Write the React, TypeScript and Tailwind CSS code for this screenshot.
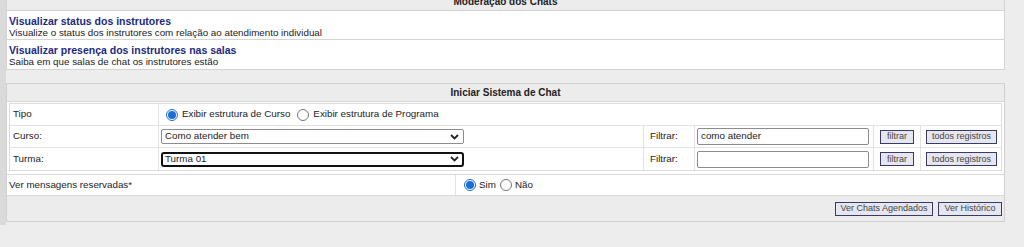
import React from "react";

function Chevron() {
  return (
    <svg width="9" height="6" viewBox="0 0 9 6" className="shrink-0">
      <path d="M1 1l3.5 3.5L8 1" fill="none" stroke="#222" strokeWidth="1.8" />
    </svg>
  );
}

function Radio({ checked }: { checked?: boolean }) {
  return (
    <span
      className={
        checked
          ? "w-[12px] h-[12px] rounded-full border border-[#1a6fd8] bg-white flex items-center justify-center shrink-0"
          : "w-[12px] h-[12px] rounded-full border border-[#767676] bg-white shrink-0"
      }
    >
      {checked && <span className="w-[8px] h-[8px] rounded-full bg-[#1a6fd8]" />}
    </span>
  );
}

function Btn({ children, className = "" }: { children: React.ReactNode; className?: string }) {
  return (
    <button
      className={
        "h-[14px] px-[1px] border border-[#3a3a64] bg-[#e6e6f0] text-[#444] text-[9px] leading-none whitespace-nowrap flex items-center justify-center " +
        className
      }
    >
      {children}
    </button>
  );
}

export default function App() {
  return (
    <div className="w-[1024px] h-[247px] bg-[#ededed] flex overflow-hidden font-['Liberation_Sans',Arial,sans-serif] text-[9.8px] text-[#222]">
      {/* left frame strip */}
      <div className="w-[6px] h-[225px] bg-[#dadada] shrink-0" />

      <div className="w-[999px] flex flex-col -mt-[7px]">
        {/* Moderação dos Chats */}
        <div className="border-x border-b border-[#d4d4d4] bg-white">
          <div className="h-[18px] bg-[#ececec] border-b border-[#d4d4d4] flex items-center justify-center font-bold text-[10px]">
            Moderação dos Chats
          </div>
          <div className="h-[29px] border-b border-[#d4d4d4] px-[2px] pt-[4px] flex flex-col leading-[12px]">
            <span className="font-bold text-[10.5px] text-[#1c2a7e]">Visualizar status dos instrutores</span>
            <span>Visualize o status dos instrutores com relação ao atendimento individual</span>
          </div>
          <div className="h-[29px] px-[2px] pt-[4px] flex flex-col leading-[12px]">
            <span className="font-bold text-[10.5px] text-[#1c2a7e]">Visualizar presença dos instrutores nas salas</span>
            <span>Saiba em que salas de chat os instrutores estão</span>
          </div>
        </div>

        {/* Iniciar Sistema de Chat */}
        <div className="mt-[13px] border border-[#d0d0d0] bg-white">
          <div className="h-[18px] bg-[#ececec] border-b border-[#d6d6d6] flex items-center justify-center font-bold text-[10px]">
            Iniciar Sistema de Chat
          </div>

          <div className="px-[2px] pt-[1px] pb-[3px]">
            <div className="border border-[#dcdcdc] grid grid-cols-[149px_485px_51px_179px_47px_81px]">
              {/* Tipo */}
              <div className="h-[22px] flex items-center px-[3px] border-r border-b border-[#e2e2e2]">Tipo</div>
              <div className="col-span-5 h-[22px] flex items-center gap-[4px] pl-[7px] border-b border-[#e2e2e2]">
                <Radio checked />
                <span className="mr-[3px]">Exibir estrutura de Curso</span>
                <Radio />
                <span>Exibir estrutura de Programa</span>
              </div>

              {/* Curso */}
              <div className="h-[22px] flex items-center px-[3px] border-r border-b border-[#e2e2e2]">Curso:</div>
              <div className="h-[22px] flex items-center px-[2px] border-r border-b border-[#e2e2e2]">
                <div className="w-[303px] h-[15px] border border-[#8c8c8c] rounded-[2px] flex items-center justify-between pl-[3px] pr-[4px]">
                  <span>Como atender bem</span>
                  <Chevron />
                </div>
              </div>
              <div className="h-[22px] flex items-center px-[6px] border-r border-b border-[#e2e2e2]">Filtrar:</div>
              <div className="h-[22px] flex items-center px-[2px] border-r border-b border-[#e2e2e2]">
                <div className="w-[172px] h-[17px] border border-[#8c8c8c] rounded-[2px] flex items-center px-[3px]">
                  como atender
                </div>
              </div>
              <div className="h-[22px] flex items-center px-[6px] border-r border-b border-[#e2e2e2]">
                <Btn className="w-[34px]">filtrar</Btn>
              </div>
              <div className="h-[22px] flex items-center px-[5px] border-b border-[#e2e2e2]">
                <Btn className="w-[72px]">todos registros</Btn>
              </div>

              {/* Turma */}
              <div className="h-[22px] flex items-center px-[3px] border-r border-[#e2e2e2]">Turma:</div>
              <div className="h-[22px] flex items-center px-[2px] border-r border-[#e2e2e2]">
                <div className="w-[303px] h-[15px] border-2 border-[#111] rounded-[3px] flex items-center justify-between pl-[2px] pr-[3px]">
                  <span>Turma 01</span>
                  <Chevron />
                </div>
              </div>
              <div className="h-[22px] flex items-center px-[6px] border-r border-[#e2e2e2]">Filtrar:</div>
              <div className="h-[22px] flex items-center px-[2px] border-r border-[#e2e2e2]">
                <div className="w-[172px] h-[17px] border border-[#8c8c8c] rounded-[2px]" />
              </div>
              <div className="h-[22px] flex items-center px-[6px] border-r border-[#e2e2e2]">
                <Btn className="w-[34px]">filtrar</Btn>
              </div>
              <div className="h-[22px] flex items-center px-[5px]">
                <Btn className="w-[72px]">todos registros</Btn>
              </div>
            </div>
          </div>

          {/* Ver mensagens reservadas */}
          <div className="h-[22px] flex border-y border-[#dadada]">
            <div className="w-[449px] flex items-center px-[2px] border-r border-[#e2e2e2]">Ver mensagens reservadas*</div>
            <div className="flex items-center gap-[3px] pl-[8px]">
              <Radio checked />
              <span className="mr-[1px]">Sim</span>
              <Radio />
              <span>Não</span>
            </div>
          </div>

          {/* Actions */}
          <div className="h-[25px] bg-[#ececec] flex items-center justify-end gap-[5px] pr-[2px]">
            <Btn className="h-[13px] w-[98px]">Ver Chats Agendados</Btn>
            <Btn className="h-[13px] w-[64px]">Ver Histórico</Btn>
          </div>
        </div>
      </div>
    </div>
  );
}
